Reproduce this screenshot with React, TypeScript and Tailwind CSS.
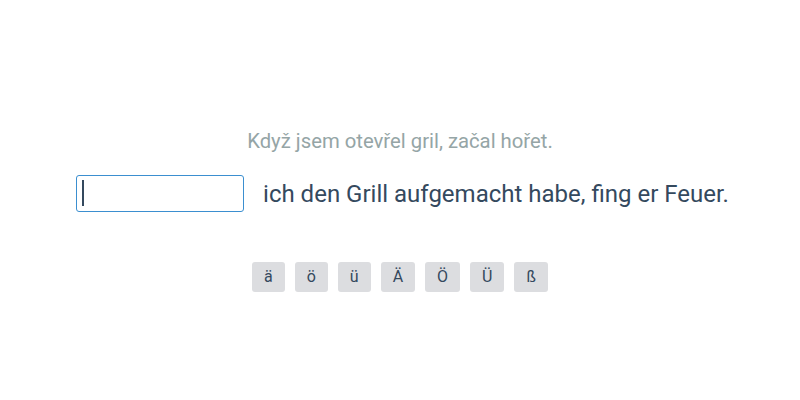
import React from "react";

const letters = ["ä", "ö", "ü", "Ä", "Ö", "Ü", "ß"];

export default function App() {
  return (
    <div
      className="flex h-[400px] w-[800px] flex-col items-center bg-white pt-[128px]"
      style={{ fontFamily: "Roboto, 'Noto Sans', sans-serif" }}
    >
      <p className="text-[20.3px] leading-[26px] text-[#95a5a6]">
        Když jsem otevřel gril, začal hořet.
      </p>
      <div className="mt-[21px] ml-[5px] flex items-center">
        <div className="relative h-[37px] w-[168px] rounded-[3px] border border-[#3b8fd0] bg-white">
          <span className="absolute left-[5px] top-[4px] h-[26px] w-[2px] bg-[#34495e]" />
        </div>
        <span className="ml-[19px] text-[24px] leading-[32px] text-[#34495e]">
          ich den Grill aufgemacht habe, fing er Feuer.
        </span>
      </div>
      <div className="mt-[50px] flex gap-[10px]">
        {letters.map((l) => (
          <button
            key={l}
            className="h-[30px] rounded-[3px] bg-[#dcdde0] px-[12px] text-[16px] text-[#34495e]"
          >
            {l}
          </button>
        ))}
      </div>
    </div>
  );
}
